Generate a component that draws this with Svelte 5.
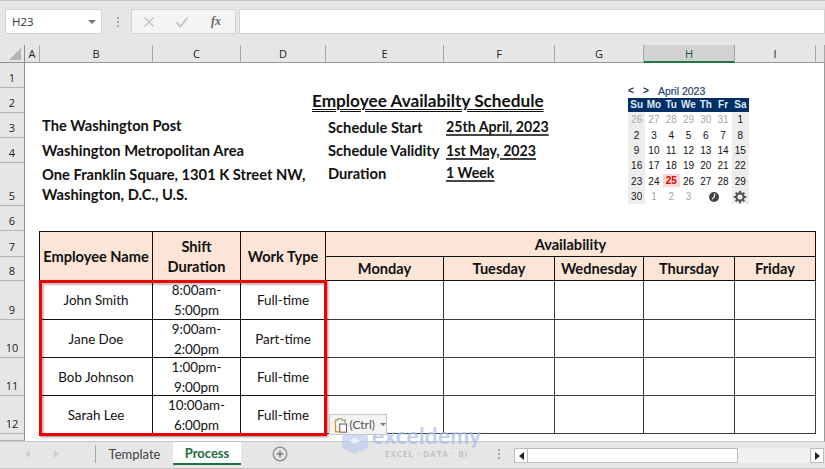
<script>
  const columns = ['A','B','C','D','E','F','G','H','I'];
  const rowHeads = [1,2,3,4,5,6,7,8,9,10,11,12];
  const people = [
    { name: 'John Smith', a: '8:00am-', b: '5:00pm', type: 'Full-time' },
    { name: 'Jane Doe', a: '9:00am-', b: '2:00pm', type: 'Part-time' },
    { name: 'Bob Johnson', a: '1:00pm-', b: '9:00pm', type: 'Full-time' },
    { name: 'Sarah Lee', a: '10:00am-', b: '6:00pm', type: 'Full-time' }
  ];
  const days = ['Monday','Tuesday','Wednesday','Thursday','Friday'];
  const dow = ['Su','Mo','Tu','We','Th','Fr','Sa'];
  const dates = [
    ['26',1],['27',1],['28',1],['29',1],['30',1],['31',1],['1',0],
    ['2',0],['3',0],['4',0],['5',0],['6',0],['7',0],['8',0],
    ['9',0],['10',0],['11',0],['12',0],['13',0],['14',0],['15',0],
    ['16',0],['17',0],['18',0],['19',0],['20',0],['21',0],['22',0],
    ['23',0],['24',0],['25',2],['26',0],['27',0],['28',0],['29',0],
    ['30',0],['1',1],['2',1],['3',1]
  ];
</script>

<div class="app">
  <div class="formula">
    <div class="namebox"><span>H23</span><i class="caret"></i></div>
    <div class="dots"><b></b><b></b><b></b></div>
    <div class="fxbox">
      <svg width="12" height="12" viewBox="0 0 12 12"><path d="M1.5 1.5l9 9M10.5 1.5l-9 9" stroke="#c6c6c6" stroke-width="1.6" fill="none"/></svg>
      <svg width="14" height="12" viewBox="0 0 14 12"><path d="M1.5 6.5l4 4 7-9" stroke="#c6c6c6" stroke-width="2" fill="none"/></svg>
      <span class="fx">fx</span>
    </div>
    <div class="input"></div>
  </div>

  <div class="sheet">
    <div class="corner"><svg width="12" height="12" viewBox="0 0 12 12"><path d="M12 0V12H0Z" fill="#b4b4b4"/></svg></div>
    {#each columns as c, i}
      <div class="colhead" class:sel={c === 'H'} style="grid-column:{i + 2}">{c}</div>
    {/each}
    <div class="colhead" style="grid-column:11"></div>
    {#each rowHeads as r}
      <div class="rowhead" style="grid-row:{r + 1}">{r}</div>
    {/each}
    <div class="rowhead" style="grid-row:14"></div>

    <div class="txt org" style="grid-column:3 / 6;grid-row:4">The Washington Post</div>
    <div class="txt org" style="grid-column:3 / 6;grid-row:5">Washington Metropolitan Area</div>
    <div class="txt org wrap" style="grid-column:3 / 6;grid-row:6">One Franklin Square, 1301 K Street NW,<br />Washington, D.C., U.S.</div>

    <div class="title" style="grid-column:5 / 9;grid-row:3">Employee Availabilty Schedule</div>
    <div class="txt lab low" style="grid-column:6;grid-row:4">Schedule Start</div>
    <div class="txt lab up" style="grid-column:6;grid-row:5">Schedule Validity</div>
    <div class="txt lab dur" style="grid-column:6;grid-row:6">Duration</div>
    <div class="txt val low" style="grid-column:7 / 9;grid-row:4"><u>25th April, 2023</u></div>
    <div class="txt val" style="grid-column:7 / 9;grid-row:5"><u>1st May, 2023</u></div>
    <div class="txt val dur" style="grid-column:7 / 9;grid-row:6"><u>1 Week</u></div>

    <div class="cal" style="grid-column:8 / 11;grid-row:2 / 7">
      <div class="calnav"><span>&lt;</span><span>&gt;</span><strong>April 2023</strong></div>
      <div class="caldow">
        {#each dow as d}<span>{d}</span>{/each}
      </div>
      <div class="caldates">
        {#each dates as [d, k], i}
          <span class:muted={k === 1} class:today={k === 2} class:wk={i % 7 === 0 || i % 7 === 6}>{d}</span>
        {/each}
        <span class="icon"><svg width="12" height="12" viewBox="0 0 12 12"><circle cx="6" cy="6" r="5" fill="#444"/><path d="M7 2.5L6 6.5L4 8" stroke="#fff" stroke-width="1.1" fill="none"/></svg></span>
        <span class="icon wk"><svg width="14" height="14" viewBox="0 0 14 14"><circle cx="7" cy="7" r="3.6" fill="none" stroke="#555" stroke-width="2.2"/><path d="M7 .8v2.4M7 10.8v2.4M.8 7h2.4M10.8 7h2.4M2.6 2.6l1.7 1.7M9.7 9.7l1.7 1.7M11.4 2.6L9.7 4.3M4.3 9.7l-1.7 1.7" stroke="#555" stroke-width="2"/></svg></span>
      </div>
    </div>

    <div class="th first top" style="grid-column:3;grid-row:8 / 10">Employee Name</div>
    <div class="th top stack" style="grid-column:4;grid-row:8 / 10"><span>Shift</span><span>Duration</span></div>
    <div class="th top" style="grid-column:5;grid-row:8 / 10">Work Type</div>
    <div class="th top" style="grid-column:6 / 11;grid-row:8">Availability</div>
    {#each days as d, i}
      <div class="th" style="grid-column:{i + 6};grid-row:9">{d}</div>
    {/each}

    {#each people as p, r}
      <div class="td first" style="grid-column:3;grid-row:{r + 10}">{p.name}</div>
      <div class="td stack" style="grid-column:4;grid-row:{r + 10}"><span>{p.a}</span><span>{p.b}</span></div>
      <div class="td" style="grid-column:5;grid-row:{r + 10}">{p.type}</div>
      {#each days as d, i}
        <div class="td blank" style="grid-column:{i + 6};grid-row:{r + 10}"></div>
      {/each}
    {/each}

    <div class="redbox"></div>

    <div class="paste">
      <svg width="14" height="16" viewBox="0 0 14 16"><path d="M4 3H1.5v12H5" fill="none" stroke="#e8922a" stroke-width="1.3"/><path d="M4 3.5V1.5h4v2M9 3h2.5v3" fill="none" stroke="#8a8a8a" stroke-width="1.2"/><rect x="6" y="7" width="7" height="8.4" fill="#fff" stroke="#555"/></svg>
      <span>(Ctrl)</span><i class="caret small"></i>
    </div>
  </div>

  <div class="tabbar">
    <div class="tabnav">
      <svg width="6" height="8" viewBox="0 0 6 8"><path d="M5 0v8L0 4Z" fill="#cfcfcf"/></svg>
      <svg width="6" height="8" viewBox="0 0 6 8"><path d="M1 0v8l5-4Z" fill="#cfcfcf"/></svg>
    </div>
    <div class="tab">Template</div>
    <div class="tab active">Process</div>
    <div class="plus"><svg width="16" height="16" viewBox="0 0 16 16"><circle cx="8" cy="8" r="6.8" fill="none" stroke="#8c8c8c" stroke-width="1.3"/><path d="M8 4.5v7M4.5 8h7" stroke="#777" stroke-width="1.4"/></svg></div>
    <div class="grip"><b></b><b></b><b></b></div>
    <div class="scroll">
      <div class="sbtn"><svg width="5" height="8" viewBox="0 0 5 8"><path d="M5 0v8L0 4Z" fill="#222"/></svg></div>
      <div class="thumb"></div>
      <div class="track"></div>
      <div class="sbtn"><svg width="5" height="8" viewBox="0 0 5 8"><path d="M0 0v8l5-4Z" fill="#222"/></svg></div>
    </div>
  </div>

  <div class="mark">
    <svg class="cube" width="28" height="24" viewBox="0 0 28 24"><path d="M14 0L27 6v12L14 24 1 18V6Z" fill="#b9c8ee" opacity=".75"/><path d="M14 8l6 3-6 3-6-3Z" fill="#f1f3fb" opacity=".8"/></svg>
    <div class="marktext">
      <span class="big">exceldemy</span>
      <span class="tiny">EXCEL · DATA · BI</span>
    </div>
  </div>
</div>

<style>
  :global(body) { margin: 0; background: #fff; }
  .app {
    position: relative;
    width: 825px;
    height: 469px;
    overflow: hidden;
    background: #e6e6e6;
    font-family: "Lato", "Open Sans", sans-serif;
    color: #111;
    display: flex;
    flex-direction: column;
  }
  .formula {
    height: 45px;
    box-sizing: border-box;
    flex: none;
    display: flex;
    align-items: center;
    padding: 0 0 3px 5px;
    border-top: 1px solid #c4c4c4;
  }
  .namebox {
    width: 97px;
    height: 25px;
    box-sizing: border-box;
    background: #fff;
    border: 1px solid #d4d4d4;
    display: flex;
    align-items: center;
    justify-content: space-between;
    padding: 0 5px 0 6px;
    font: 11.5px "Open Sans", sans-serif;
    color: #333;
  }
  .caret {
    width: 0;
    height: 0;
    border-left: 4px solid transparent;
    border-right: 4px solid transparent;
    border-top: 4px solid #777;
  }
  .caret.small { border-left-width: 3px; border-right-width: 3px; border-top-width: 3px; margin-left: 3px; }
  .dots { width: 30px; display: flex; flex-direction: column; gap: 2px; align-items: center; flex: none; padding-left: 2px; box-sizing: border-box; }
  .dots b, .grip b { width: 2px; height: 2px; background: #a8a8a8; display: block; }
  .fxbox {
    width: 105px;
    height: 25px;
    box-sizing: border-box;
    background: #f4f4f4;
    border: 1px solid #d4d4d4;
    display: flex;
    align-items: center;
    gap: 20px;
    padding-left: 11px;
    margin-left: -1px;
  }
  .fx { font: italic bold 12px "Liberation Serif", serif; color: #666; margin-left: 2px; }
  .input { flex: 1; height: 25px; box-sizing: border-box; background: #fff; border: 1px solid #d4d4d4; margin-left: 3px; }

  .sheet {
    flex: none;
    height: 397px;
    background: #fff;
    display: grid;
    grid-template-columns: 25px 15px 113px 88px 85px 118px 111px 89px 91px 81px 9px;
    grid-template-rows: 18px 25px 25px 25px 25px 43px 25px 26px 24px 39px 38px 38px 38px 7px;
    border-right: 1px solid #9a9a9a;
    box-sizing: border-box;
    border-bottom: 1px solid #c4c4c4;
  }
  .corner, .colhead, .rowhead { background: #e6e6e6; font: 11px "Open Sans", sans-serif; color: #222; }
  .corner { grid-column: 1; grid-row: 1; display: flex; align-items: flex-end; justify-content: flex-end; padding: 0 3px 2px 0; border-right: 1px solid #8f8f8f; border-bottom: 1px solid #8f8f8f; box-sizing: border-box; }
  .colhead {
    grid-row: 1;
    display: flex;
    align-items: center;
    justify-content: center;
    box-sizing: border-box;
    border-right: 1px solid #a8a8a8;
    border-bottom: 1px solid #9a9a9a;
  }
  .colhead.sel { background: #d2d2d2; border-bottom: 2px solid #217346; color: #0f5a32; }
  .rowhead {
    grid-column: 1;
    display: flex;
    align-items: flex-end;
    justify-content: center;
    box-sizing: border-box;
    padding-bottom: 2px;
    border-right: 1px solid #8f8f8f;
    border-bottom: 1px solid #b4b4b4;
    line-height: 15px;
  }

  .txt { white-space: nowrap; font-weight: 700; font-size: 14.7px; line-height: 20px; align-self: center; }
  .org { padding-left: 2px; padding-bottom: 2px; }
  .wrap { align-self: start; padding-top: 1px; padding-bottom: 0; }
  .lab { padding-left: 2px; }
  .low { padding-top: 3px; }
  .up { padding-bottom: 1px; }
  .val { padding-left: 2px; font-size: 14.2px; }
  .val u { text-decoration-thickness: 2px; text-underline-offset: 2px; text-decoration-color: #444; }
  .dur { align-self: start; padding-top: 0; }
  .title {
    font-weight: 700;
    font-size: 17.2px;
    white-space: nowrap;
    padding-left: 71px;
    align-self: center;
    line-height: 20px;
    text-decoration: underline double;
    text-decoration-thickness: 1px;
    text-underline-offset: 2px;
  }

  .cal { margin: 21px 0 0 73px; width: 121px; font-family: "Liberation Sans", Arial, sans-serif; font-size: 10px; }
  .calnav { height: 14px; display: flex; align-items: center; gap: 9px; line-height: 14px; }
  .calnav span { color: #1c2f50; font-weight: 700; width: 6px; }
  .calnav strong { font-weight: 400; font-size: 10.5px; color: #1f3f70; -webkit-text-stroke: .2px #1f3f70; }
  .caldow { display: grid; grid-template-columns: repeat(7, 1fr); background: #002f66; color: #dfeaf7; font-weight: 700; height: 14px; line-height: 14px; text-align: center; }
  .caldates { display: grid; grid-template-columns: repeat(7, 1fr); grid-auto-rows: 15.4px; }
  .caldates span { display: flex; align-items: center; justify-content: center; color: #111; }
  .caldates .wk { background: #ededed; }
  .caldates .muted { color: #a8a8a8; }
  .caldates .today { background: #fbd6d6; color: #e00000; font-weight: 700; margin-bottom: 2px; }
  .caldates .icon { grid-column: 5 / 7; padding-right: 0; }
  .caldates .icon.wk { grid-column: 7; }

  .th, .td {
    display: flex;
    align-items: center;
    justify-content: center;
    box-sizing: border-box;
    border-right: 1px solid #111;
    border-bottom: 1px solid #111;
    white-space: nowrap;
  }
  .th { background: #fce4d6; font-weight: 700; font-size: 14.6px; }
  .th.stack { padding-top: 2px; }
  .td { font-size: 13.4px; }
  .td.blank { border-color: #3c3c3c; }
  .first { border-left: 1px solid #111; margin-left: -1px; }
  .top { border-top: 1px solid #111; }
  .stack { flex-direction: column; line-height: 20px; }
  .redbox {
    grid-column: 3 / 6;
    grid-row: 10 / 14;
    margin: -1px -1px -2px -1px;
    box-sizing: border-box;
    border: 3px solid #f00000;
    box-shadow: 1px 1px 2px rgba(0,0,0,.45), inset 2px 2px 2px rgba(0,0,0,.25);
    pointer-events: none;
  }
  .paste {
    grid-column: 6;
    grid-row: 13;
    align-self: end;
    width: 58px;
    height: 21px;
    margin: 0 0 -1px 3px;
    box-sizing: border-box;
    background: #f4f4f4;
    border: 1px solid #c6c6c6;
    display: flex;
    align-items: center;
    padding-left: 4px;
    gap: 2px;
    font-size: 12px;
    color: #555;
    z-index: 2;
  }

  .tabbar {
    flex: none;
    height: 26px;
    display: flex;
    align-items: stretch;
    border-bottom: 1px solid #c4c4c4;
  }
  .tabnav { width: 96px; box-sizing: border-box; display: flex; align-items: center; gap: 22px; padding-left: 25px; border-right: 1px solid #a8a8a8; margin: 3px 0 5px; flex: none; }
  .tab { display: flex; align-items: center; justify-content: center; font-size: 13px; color: #444; width: 77px; flex: none; height: 23px; }
  .tab.active { width: 68px; background: #fff; color: #1e6b41; font-weight: 700; border-bottom: 2px solid #217346; box-sizing: border-box; }
  .plus { display: flex; align-items: center; margin-left: 31px; flex: none; width: 16px; height: 24px; }
  .grip { display: flex; flex-direction: column; justify-content: center; gap: 2px; margin-left: 210px; flex: none; height: 24px; }
  .scroll { display: flex; margin: 6px 1px 5px 14px; flex: 1; align-items: stretch; }
  .sbtn { width: 14px; flex: none; background: #fff; border: 1px solid #bdbdbd; box-sizing: border-box; display: flex; align-items: center; justify-content: center; }
  .thumb { width: 210px; flex: none; background: #fff; border: 1px solid #bdbdbd; border-left: 0; box-sizing: border-box; }
  .track { flex: 1; background: #f0f0f0; }

  .mark {
    position: absolute;
    left: 341px;
    top: 425px;
    display: flex;
    gap: 3px;
    pointer-events: none;
    opacity: .85;
  }
  .cube { margin-top: 5px; }
  .marktext { display: flex; flex-direction: column; align-items: center; }
  .big { font: 700 22.5px/21px "Lato", sans-serif; color: #a9bcec; letter-spacing: .3px; opacity: .85; }
  .tiny { font: 700 8px/11px "Open Sans", sans-serif; color: #bdbdbd; letter-spacing: 1px; margin-top: 2px; }
</style>
